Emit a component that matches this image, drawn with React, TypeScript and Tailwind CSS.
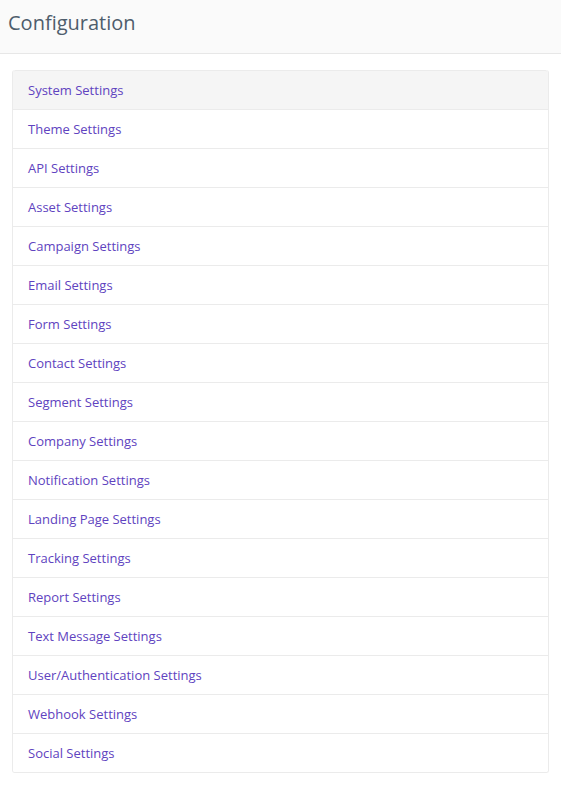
import React from 'react';

const items = [
  'System Settings',
  'Theme Settings',
  'API Settings',
  'Asset Settings',
  'Campaign Settings',
  'Email Settings',
  'Form Settings',
  'Contact Settings',
  'Segment Settings',
  'Company Settings',
  'Notification Settings',
  'Landing Page Settings',
  'Tracking Settings',
  'Report Settings',
  'Text Message Settings',
  'User/Authentication Settings',
  'Webhook Settings',
  'Social Settings',
];

export default function App() {
  return (
    <div className="min-h-screen bg-white" style={{ fontFamily: '"Open Sans", sans-serif' }}>
      <div className="h-[54px] bg-[#fafafa] border-b border-[#e7e7e7] flex items-center px-2">
        <h1 className="text-[20px] text-[#4e5d6c] leading-none -mt-[8px]">Configuration</h1>
      </div>
      <div className="px-3 pt-4">
        <div className="border-x border-b border-[#ebebeb] rounded-[3px] overflow-hidden">
          {items.map((label, i) => (
            <a
              key={label}
              href="#"
              className={`block h-[39px] leading-[38px] px-[15px] text-[13px] text-[#6043c0] border-t border-[#ebebeb] ${
                i === 0 ? 'bg-[#f5f5f5] rounded-t-[3px]' : 'bg-white'
              }`}
            >
              {label}
            </a>
          ))}
        </div>
      </div>
    </div>
  );
}
